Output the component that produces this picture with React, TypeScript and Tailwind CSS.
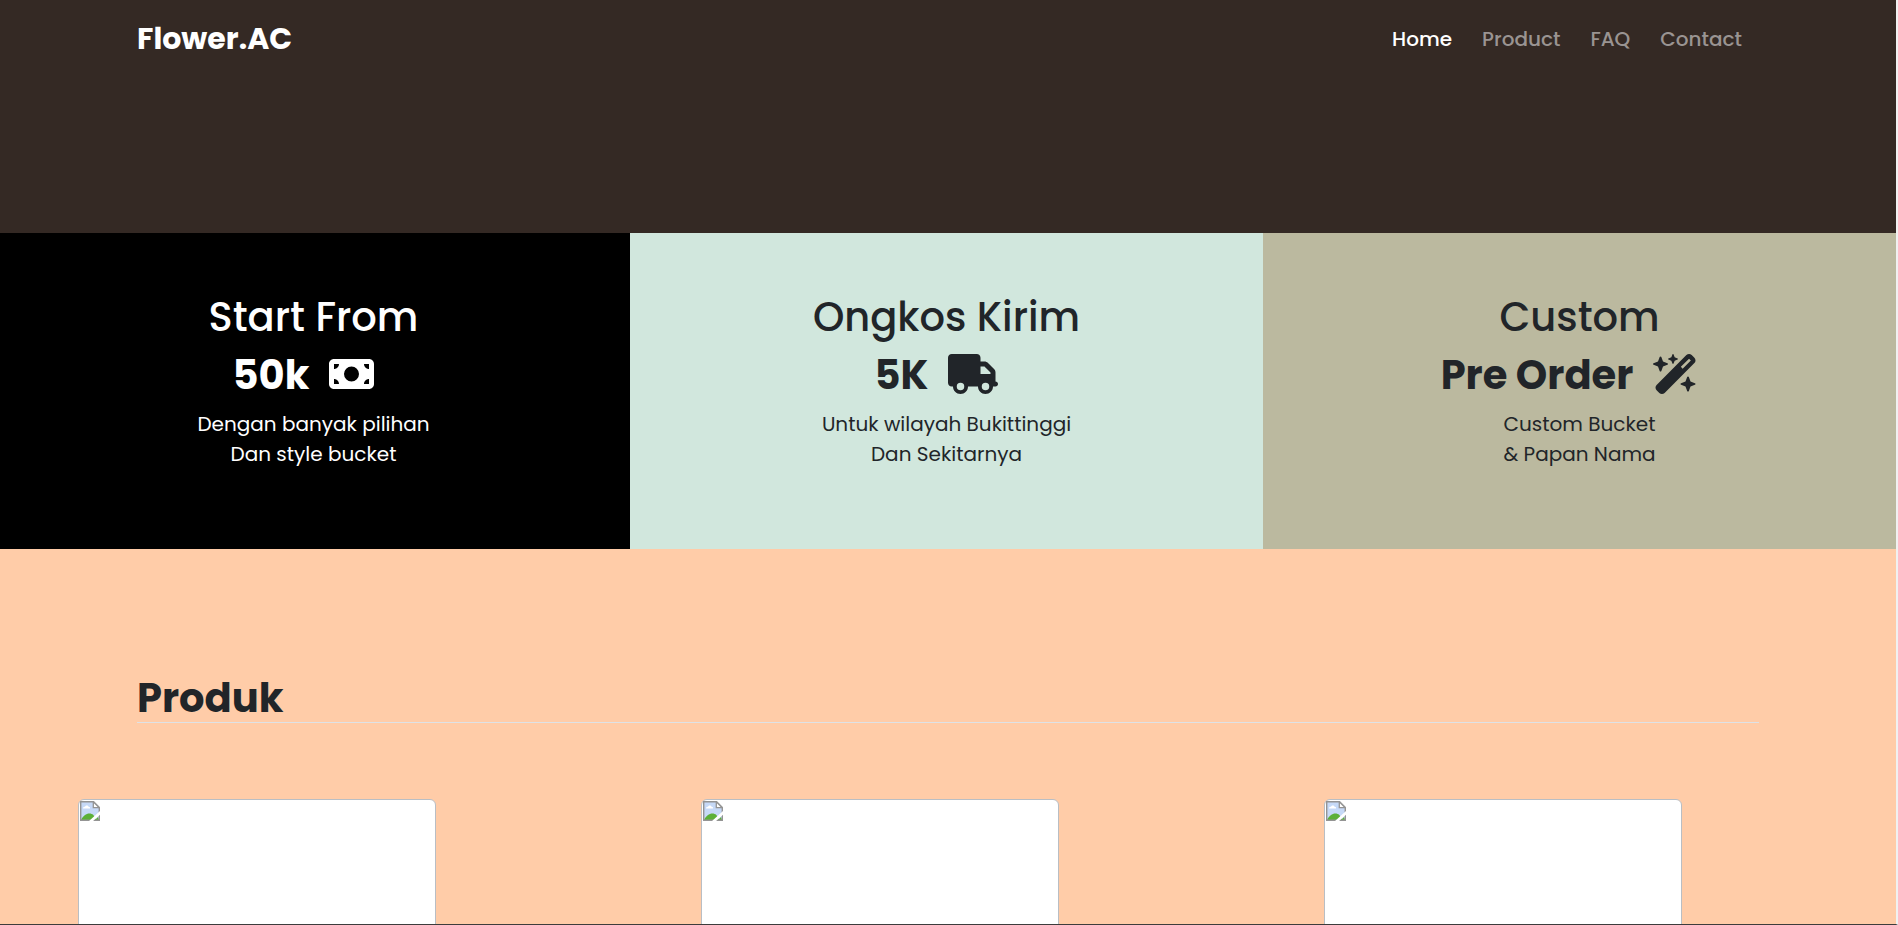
import type { IconType } from "react-icons";
import { FaMoneyBill, FaTruck, FaWandMagicSparkles } from "react-icons/fa6";

const links = [
  { label: "Home", href: "#home", active: true },
  { label: "Product", href: "#product", active: false },
  { label: "FAQ", href: "#faq", active: false },
  { label: "Contact", href: "#contact", active: false },
];

type Offer = {
  title: string;
  value: string;
  lines: [string, string];
  icon: IconType;
  iconWidth: string;
  panel: string;
};

const offers: Offer[] = [
  {
    title: "Start From",
    value: "50k",
    lines: ["Dengan banyak pilihan", "Dan style bucket"],
    icon: FaMoneyBill,
    iconWidth: "w-[45px]",
    panel: "bg-black text-white",
  },
  {
    title: "Ongkos Kirim",
    value: "5K",
    lines: ["Untuk wilayah Bukittinggi", "Dan Sekitarnya"],
    icon: FaTruck,
    iconWidth: "w-[50px]",
    panel: "bg-[#d1e7dd] text-[#212529]",
  },
  {
    title: "Custom",
    value: "Pre Order",
    lines: ["Custom Bucket", "& Papan Nama"],
    icon: FaWandMagicSparkles,
    iconWidth: "w-[45px]",
    panel: "bg-[#bbb99f] text-[#212529]",
  },
];

function MissingImage() {
  return (
    <svg width="20" height="20" viewBox="0 0 20 20" aria-hidden="true">
      <path d="M.5.5h13l6 6v13H.5z" fill="#c6d9f7" />
      <path d="M3 7.5c0-1.400 1-2 2-1.700C5.500 4.200 8 4 8.600 5.700 9.800 5.600 10.300 6.600 10 7.500z" fill="#fff" />
      <path d="M1 19c2-4 5-6.500 8.500-6.500 3 0 5 2 6.500 6.500z" fill="#5cb037" />
      <path d="M15 19l3-3 1 3z" fill="#5cb037" />
      <path d="M.7 19.300V.7h12.800l5.800 5.800v12.800z" fill="none" stroke="#949494" strokeWidth="1.400" />
      <path d="M13.300.7v6h6z" fill="#fff" stroke="#949494" strokeWidth="1.300" />
      <path d="M8.500 20.500L20.500 9.500v3.800L12.500 20.500z" fill="#fff" />
    </svg>
  );
}

function OfferPanel({ offer }: { offer: Offer }) {
  const Icon = offer.icon;
  return (
    <article className={`flex flex-col items-center pt-[60px] pb-20 text-center ${offer.panel}`}>
      <h2 className="text-[40px] leading-12 font-medium">{offer.title}</h2>
      <div className="mt-[10px] flex h-12 items-center gap-5 pr-5">
        <strong className="text-[40px] leading-12 font-bold">{offer.value}</strong>
        <Icon className={`mb-0.5 h-10 ${offer.iconWidth}`} aria-hidden="true" />
      </div>
      <p className="mt-[10px] text-xl leading-[30px]">
        {offer.lines[0]}
        <br />
        {offer.lines[1]}
      </p>
    </article>
  );
}

export default function App() {
  return (
    <div className="h-screen overflow-hidden border-r-2 border-b border-r-[#f1f1f1] border-b-[#3c3c3c] bg-[#ffcca8] font-['Poppins','Inter',sans-serif] text-[#212529]">
      <header className="h-[233px] bg-[#342924] px-[137px]">
        <nav className="flex items-center justify-between pt-[17px] pr-[17px]">
          <a href="#home" className="text-3xl leading-11 font-bold text-white">
            Flower.AC
          </a>
          <ul className="flex gap-[30px] text-xl leading-11 font-medium">
            {links.map((link) => (
              <li key={link.label}>
                <a href={link.href} className={link.active ? "text-white" : "text-[#9a9492]"}>
                  {link.label}
                </a>
              </li>
            ))}
          </ul>
        </nav>
      </header>

      <section className="-ml-[3px] grid grid-cols-3">
        {offers.map((offer) => (
          <OfferPanel key={offer.title} offer={offer} />
        ))}
      </section>

      <section id="product" className="pt-[125px]">
        <h1 className="mx-[137px] border-b border-[#dee2e6] text-[40px] leading-12 font-bold">Produk</h1>
        <div className="-mr-[51px] ml-[78px] grid grid-cols-3 pt-[76px]">
          {["one", "two", "three"].map((key) => (
            <div key={key} className="h-[480px] w-[358px] rounded-md border border-[#b9bec4] bg-white p-px">
              <MissingImage />
            </div>
          ))}
        </div>
      </section>
    </div>
  );
}
